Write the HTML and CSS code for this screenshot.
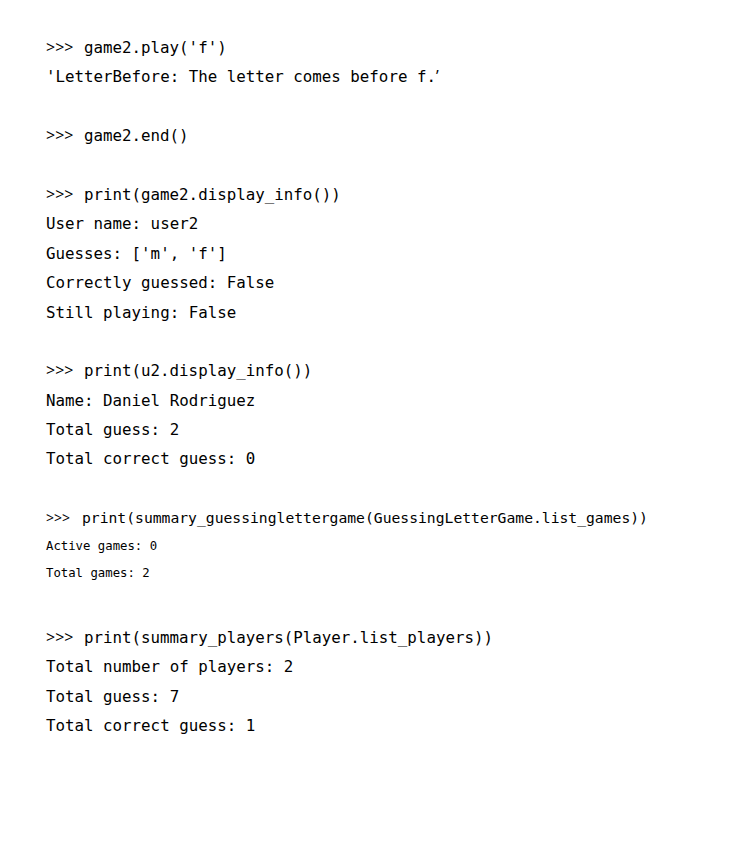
FILE: index.html
```html
<!DOCTYPE html>
<html>
<head>
<meta charset="utf-8">
<link rel="stylesheet" href="styles.css">
</head>
<body>
<div class="doc">
  <div class="block">
    <div class="line"><span class="ps">&gt;&gt;&gt;</span>game2.play('f')</div>
    <div class="line">'LetterBefore: The letter comes before f.<span class="q">’</span></div>
  </div>
  <div class="block">
    <div class="line"><span class="ps">&gt;&gt;&gt;</span>game2.end()</div>
  </div>
  <div class="block">
    <div class="line"><span class="ps">&gt;&gt;&gt;</span>print(game2.display_info())</div>
    <div class="line">User name: user2</div>
    <div class="line">Guesses: ['m', 'f']</div>
    <div class="line">Correctly guessed: False</div>
    <div class="line">Still playing: False</div>
  </div>
  <div class="block">
    <div class="line"><span class="ps">&gt;&gt;&gt;</span>print(u2.display_info())</div>
    <div class="line">Name: Daniel Rodriguez</div>
    <div class="line">Total guess: 2</div>
    <div class="line">Total correct guess: 0</div>
  </div>
  <div class="block">
    <div class="line mid"><span class="ps">&gt;&gt;&gt;</span>print(summary_guessinglettergame(GuessingLetterGame.list_games))</div>
    <div class="line small">Active games: 0</div>
    <div class="line small">Total games: 2</div>
  </div>
  <div class="block wide">
    <div class="line"><span class="ps">&gt;&gt;&gt;</span>print(summary_players(Player.list_players))</div>
    <div class="line">Total number of players: 2</div>
    <div class="line">Total guess: 7</div>
    <div class="line">Total correct guess: 1</div>
  </div>
</div>
</body>
</html>
```
FILE: styles.css
```css
html, body {
  margin: 0;
  padding: 0;
  background: #ffffff;
}

.doc {
  padding: 33px 0 0 46px;
  color: #000000;
}

.block {
  margin-bottom: 29.4px;
}

.block.wide {
  margin-top: 36.4px;
}

.line {
  font-family: "DejaVu Sans Mono", "Liberation Mono", monospace;
  font-size: 15.8px;
  line-height: 29.4px;
  height: 29.4px;
  white-space: pre;
}

.ps {
  display: inline-block;
  width: 38px;
  font-family: "Open Sans", "Noto Sans", sans-serif;
  font-size: 16px;
}

.q {
  font-family: "Open Sans", sans-serif;
}

.line.mid {
  font-size: 14.7px;
}

.line.mid .ps {
  width: 36px;
  font-size: 14px;
}

.line.small {
  font-size: 12.3px;
  line-height: 27px;
  height: 27px;
}
```
